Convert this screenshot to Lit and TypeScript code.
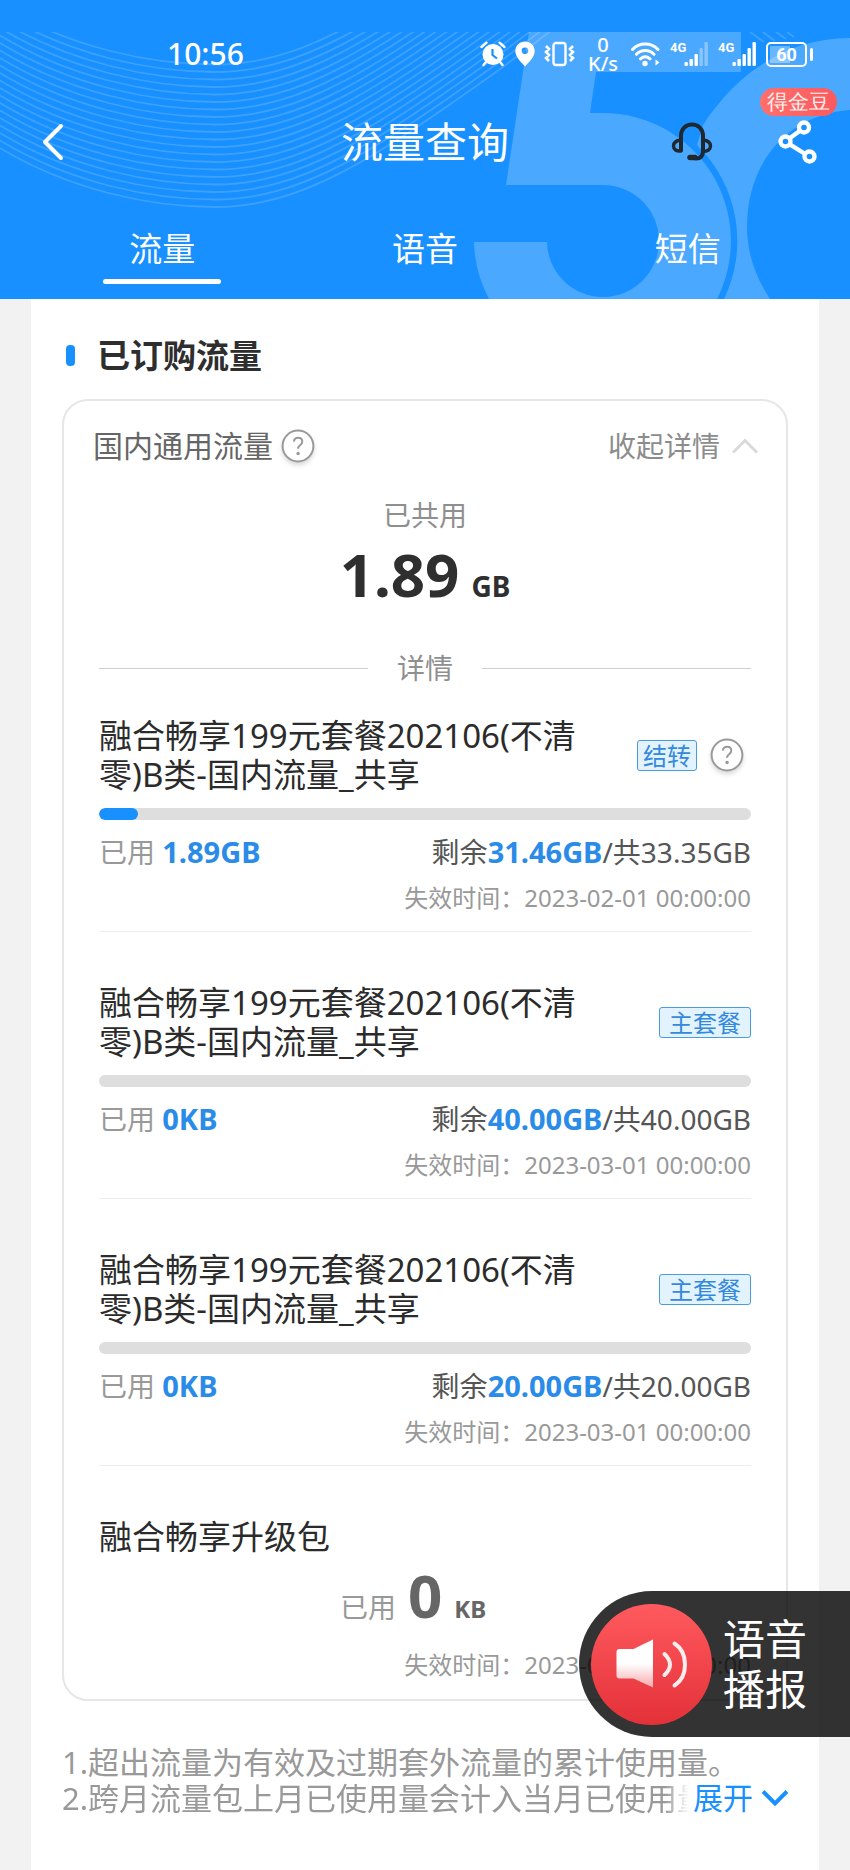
import { LitElement, html, svg, css, nothing } from "lit";
import { customElement, property, state } from "lit/decorators.js";

interface Plan {
  name: string;
  tag: string;
  carry: boolean;
  used: string;
  left: string;
  total: string;
  percent: number;
  expires: string;
}

const PLAN_NAME = "融合畅享199元套餐202106(不清零)B类-国内流量_共享";

const PLANS: Plan[] = [
  { name: PLAN_NAME, tag: "结转", carry: true, used: "1.89GB", left: "31.46GB", total: "33.35GB", percent: 6, expires: "2023-02-01 00:00:00" },
  { name: PLAN_NAME, tag: "主套餐", carry: false, used: "0KB", left: "40.00GB", total: "40.00GB", percent: 0, expires: "2023-03-01 00:00:00" },
  { name: PLAN_NAME, tag: "主套餐", carry: false, used: "0KB", left: "20.00GB", total: "20.00GB", percent: 0, expires: "2023-03-01 00:00:00" },
];

@customElement("help-button")
class HelpButton extends LitElement {
  static styles = css`
    :host { display: block; flex: none; }
    .help {
      display: block;
      padding: 0;
      border: 0;
      background: none;
      filter: drop-shadow(0 3px 2px rgba(0, 0, 0, 0.14));
    }
    .help svg { display: block; }
  `;
  render() {
    return html`<button class="help" aria-label="说明">
      <svg width="34" height="34" viewBox="0 0 34 34" fill="none" stroke="#999">
        <circle cx="17" cy="17" r="15.4" stroke-width="2" fill="#fff" />
        <path d="M12.8 12.6c.3-2.500 2-3.800 4.300-3.800 2.400 0 4.200 1.400 4.200 3.700 0 1.700-.9 2.700-2.200 3.700-1.400 1.100-2 1.700-2 3.500" stroke-width="2" />
        <circle cx="17.100" cy="24.500" r="1.700" fill="#999" stroke="none" />
      </svg>
    </button>`;
  }
}

@customElement("status-bar")
class StatusBar extends LitElement {
  static styles = css`
    :host {
      display: flex;
      justify-content: space-between;
      align-items: center;
      height: 44px;
      padding: 0 37px 0 167px;
      color: #fff;
    }
    .time { font-size: 30px; line-height: 40px; font-weight: 500; }
    .icons { display: flex; align-items: center; gap: 9px; }
    .icons svg { display: block; flex: none; }
    .rate {
      width: 30px;
      margin: 0 4px;
      font-size: 20px;
      line-height: 19px;
      font-weight: 500;
      text-align: center;
    }
    .rate span { display: block; }
    .signal { display: grid; grid-template-columns: 14px 25px; height: 26px; }
    .net { font: 700 13px/13px Roboto, sans-serif; white-space: nowrap; }
    .battery { display: flex; align-items: center; gap: 3px; }
    .cell {
      box-sizing: border-box;
      width: 41px;
      height: 25px;
      border: 2px solid #fff;
      border-radius: 5px;
      background: linear-gradient(90deg, rgba(255, 255, 255, 0.35) 60%, transparent 60%);
      background-clip: content-box;
      padding: 2px;
      display: grid;
      place-items: center;
      font: 700 18px/18px Roboto, sans-serif;
    }
    .tip { width: 3px; height: 13px; border-radius: 2px; background: #fff; }
  `;

  private bars(opacities: number[]) {
    return html`<svg width="25" height="26" viewBox="0 0 25 26" fill="#fff">
      ${opacities.map((o, i) => {
        const h = [4, 7, 12, 18, 24][i];
        return svg`<rect x=${i * 5 + 0.5} y=${25 - h} width="3.400" height=${h} rx="1" opacity=${o} />`;
      })}
    </svg>`;
  }

  render() {
    return html`
      <span class="time">10:56</span>
      <div class="icons">
        <svg width="26" height="26" viewBox="0 0 26 26" fill="none" stroke="#fff">
          <circle cx="13" cy="13.500" r="10.500" fill="#fff" stroke="none" />
          <path d="M1.500 6 6.500 1.700M24.500 6l-5-4.300M5.500 21.500 3.500 24M20.500 21.500l2 2.500" stroke-width="2.400" stroke-linecap="round" />
          <path d="M12.500 8v6l4.500 3.500" stroke="#1890ff" stroke-width="2.200" />
        </svg>
        <svg width="20" height="26" viewBox="0 0 20 26" fill="#fff" fill-rule="evenodd">
          <path d="M10 .5C4.600.5.3 4.600.3 9.800.3 16 5.500 20.500 10 25.500c4.500-5 9.700-9.500 9.700-15.700C19.700 4.600 15.400.5 10 .5zm0 6a3.300 3.300 0 1 1 0 6.600 3.300 3.300 0 0 1 0-6.600z" />
        </svg>
        <svg width="31" height="26" viewBox="0 0 31 26" fill="none" stroke="#fff" stroke-width="2.400">
          <rect x="9.500" y="2" width="12" height="22" rx="2.500" />
          <path d="M2 5l3 3-3 3 3 3-3 3 3 3M29 5l-3 3 3 3-3 3 3 3-3 3" stroke-width="2.600" />
        </svg>
        <div class="rate"><span>0</span><span>K/s</span></div>
        <svg width="30" height="26" viewBox="0 0 30 26" fill="none" stroke="#fff" stroke-width="3" stroke-linecap="round">
          <path d="M1.500 8.500c7-7.300 18.500-7.300 25.500 0M5.500 13.300c5-5 12.500-5 17.500 0M9.500 17.800c3-2.600 6.500-2.600 9.500 0" />
          <circle cx="14" cy="22.500" r="2.700" fill="#fff" stroke="none" />
          <path d="M24.500 18.500v6l4-3z" fill="#fff" stroke="none" />
        </svg>
        <div class="signal"><span class="net">4G</span>${this.bars([1, 1, 1, 0.35, 0.35])}</div>
        <div class="signal"><span class="net">4G</span>${this.bars([1, 1, 1, 1, 1])}</div>
        <div class="battery"><span class="cell">60</span><span class="tip"></span></div>
      </div>
    `;
  }
}

@customElement("page-header")
class PageHeader extends LitElement {
  @state() private active = 0;

  static styles = css`
    :host {
      display: block;
      position: relative;
      box-sizing: border-box;
      padding-top: 32px;
      background: #1890ff;
      color: #fff;
    }
    .art {
      position: absolute;
      top: 32px;
      right: 0;
      width: 100%;
      height: calc(100% - 32px);
    }
    status-bar, .nav, .tabs { position: relative; }
    .nav {
      display: grid;
      grid-template-columns: 1fr auto 1fr;
      align-items: center;
      height: 132px;
      padding: 0 33px;
    }
    .nav svg { display: block; }
    .icon { padding: 0; border: 0; background: none; }
    .back { justify-self: start; margin-left: 8px; }
    .title { margin: 0; font-size: 42px; line-height: 56px; font-weight: 400; }
    .actions { display: flex; justify-content: flex-end; align-items: center; gap: 65px; }
    .share { position: relative; }
    .badge {
      position: absolute;
      right: -20px;
      bottom: 48px;
      padding: 0 7px;
      border-radius: 14px;
      background: linear-gradient(90deg, #ff6f6b, #fb5a5f);
      color: #fff0ee;
      font-size: 21px;
      line-height: 28px;
      white-space: nowrap;
    }
    .tabs {
      display: grid;
      grid-template-columns: repeat(3, 1fr);
      height: 91px;
      padding: 0 31px;
    }
    .tab {
      display: flex;
      flex-direction: column;
      align-items: center;
      gap: 8px;
      padding: 19px 0 0;
      border: 0;
      background: none;
      color: inherit;
      font: inherit;
      font-size: 33px;
      line-height: 44px;
    }
    .line { width: 45%; height: 5px; border-radius: 3px; }
    .tab.active .line { background: #fff; }
  `;

  render() {
    const rings = Array.from({ length: 20 }, (_, i) => -7.5 * i);
    return html`
      <svg class="art" viewBox="0 32 850 267" preserveAspectRatio="xMaxYMin slice" aria-hidden="true">
        <g fill="none" stroke="#fff" stroke-opacity="0.16" stroke-width="1.800">
          ${rings.map(
            (dy) => svg`<path transform="translate(0 ${dy})" d="M-60 105C-40 122-20 135 0 148 70 190 150 207 215 207 300 207 370 162 503 67L560 24 620-22" />`
          )}
          <path d="M750 32l14 10M763 32l12 9M776 32l10 7M787 32l7 5" />
        </g>
        <g fill="#fff" fill-opacity="0.225">
          <path d="M529 32H741V72H596L590 113H603A128 128 0 0 1 717 299H489A128 128 0 0 1 474 242H547A56 56 0 1 0 603 185H506z" />
          <path d="M850 38C792 38 740 68 703 125L697 145A134 134 0 0 1 724 299H770C756 278 747 254 747 227 747 160 790 114 850 110z" />
        </g>
      </svg>
      <status-bar></status-bar>
      <div class="nav">
        <button class="icon back" aria-label="返回">
          <svg width="24" height="38" viewBox="0 0 24 38" fill="none" stroke="#fff" stroke-width="4" stroke-linecap="round" stroke-linejoin="round">
            <path d="M20 3 4 19l16 16" />
          </svg>
        </button>
        <h1 class="title">流量查询</h1>
        <div class="actions">
          <button class="icon" aria-label="客服">
            <svg width="42" height="40" viewBox="0 0 42 40" fill="none" stroke="#20282f" stroke-width="4" stroke-linecap="round">
              <path d="M10 28V13.500C10 7 14.800 2.500 21 2.500S32 7 32 13.500V29c0 5-2.500 7.500-7 7.500" />
              <path d="M19 35.500h5" stroke-width="5.500" />
              <path d="M10 18c-4.500.5-7.500 2.500-7.500 6s3 5.500 7.500 5M32 18c4.500.5 7.500 2.500 7.500 6s-3 5.500-7.500 5.500" stroke-width="3.400" />
            </svg>
          </button>
          <button class="icon share" aria-label="分享">
            <svg width="39" height="44" viewBox="0 0 39 44" fill="none" stroke="#fff" stroke-width="4.400">
              <circle cx="26" cy="7.500" r="5" />
              <circle cx="7.500" cy="21.500" r="5" />
              <circle cx="31.500" cy="36.500" r="5" />
              <path d="M22 10.800 11.700 18.300M11.800 24.300l15.400 9.700" />
            </svg>
            <span class="badge">得金豆</span>
          </button>
        </div>
      </div>
      <nav class="tabs" role="tablist">
        ${["流量", "语音", "短信"].map(
          (label, i) => html`<button
            class="tab ${i === this.active ? "active" : ""}"
            role="tab"
            aria-selected=${i === this.active}
            @click=${() => (this.active = i)}
          ><span>${label}</span><span class="line"></span></button>`
        )}
      </nav>
    `;
  }
}

@customElement("plan-item")
class PlanItem extends LitElement {
  @property({ attribute: false }) plan!: Plan;

  static styles = css`
    :host {
      display: block;
      padding-bottom: 15px;
      border-bottom: 1px solid #ececec;
    }
    .head { display: flex; align-items: center; justify-content: space-between; }
    .name {
      max-width: 78%;
      margin: 0;
      font-size: 33px;
      line-height: 39px;
      font-weight: 400;
      color: #2b2b2b;
      word-break: break-all;
    }
    .marks { display: flex; align-items: center; gap: 13px; }
    .marks.carry { margin-right: 7px; }
    .tag {
      padding: 0 9px;
      border: 1px solid #4a9be0;
      border-radius: 3px;
      background: #e2f3fe;
      color: #3489dc;
      font-size: 24px;
      line-height: 29px;
      white-space: nowrap;
    }
    .carry .tag { padding: 0 5px; }
    .bar {
      height: 12px;
      margin: 14px 0 12px;
      border-radius: 6px;
      background: #dedede;
      overflow: hidden;
    }
    .fill { height: 100%; border-radius: 6px; background: #1890ff; }
    .usage {
      display: flex;
      justify-content: space-between;
      height: 40px;
      font-size: 28px;
      line-height: 40px;
      color: #555;
    }
    .used { color: #999; }
    .num { font-size: 29px; font-weight: 700; color: #2a8be8; }
    .expires {
      margin: 8px 0 0;
      text-align: right;
      font-size: 24px;
      line-height: 36px;
      color: #999;
    }
  `;

  render() {
    const p = this.plan;
    return html`
      <div class="head">
        <h3 class="name">${p.name}</h3>
        <div class="marks ${p.carry ? "carry" : ""}">
          <span class="tag">${p.tag}</span>
          ${p.carry ? html`<help-button></help-button>` : nothing}
        </div>
      </div>
      <div class="bar" role="progressbar" aria-valuenow=${p.percent} aria-valuemin="0" aria-valuemax="100">
        <div class="fill" style="width:${p.percent}%"></div>
      </div>
      <div class="usage">
        <span class="used">已用 <span class="num">${p.used}</span></span>
        <span>剩余<span class="num">${p.left}</span>/共${p.total}</span>
      </div>
      <p class="expires">失效时间：${p.expires}</p>
    `;
  }
}

@customElement("voice-button")
class VoiceButton extends LitElement {
  static styles = css`
    :host { display: block; }
    .voice {
      display: flex;
      align-items: center;
      gap: 11px;
      height: 146px;
      padding: 0 43px 0 12px;
      border: 0;
      border-radius: 73px 0 0 73px;
      background: rgba(0, 0, 0, 0.8);
      color: #fff;
      font: inherit;
      font-size: 42px;
      line-height: 50px;
      text-align: left;
    }
    .label span { display: block; }
    svg { display: block; flex: none; }
  `;
  render() {
    return html`<button class="voice">
      <svg width="121" height="121" viewBox="-60.500 -60.500 121 121">
        <defs>
          <linearGradient id="disc" x1="0" y1="0" x2="0" y2="1">
            <stop offset="0" stop-color="#ff5a5f" />
            <stop offset="1" stop-color="#e33138" />
          </linearGradient>
          <linearGradient id="horn" x1="0" y1="0" x2="0" y2="1">
            <stop offset="0.500" stop-color="#fff" />
            <stop offset="1" stop-color="#fff" stop-opacity="0.550" />
          </linearGradient>
        </defs>
        <circle r="60.500" fill="url(#disc)" />
        <path d="M-32-15.500h14L1.500-25v48L-18 14h-14q-3 0-3-3v-23.500q0-3 3-3z" fill="url(#horn)" />
        <g fill="none" stroke="#fff" stroke-linecap="round">
          <path d="M13-10.500q11 10.500 0 21" stroke-width="4" opacity="0.900" />
          <path d="M23-21c14 9 14 33 0 42" stroke-width="4" opacity="0.900" />
        </g>
      </svg>
      <span class="label"><span>语音</span><span>播报</span></span>
    </button>`;
  }
}

@customElement("app-root")
class AppRoot extends LitElement {
  static styles = css`
    :host {
      display: flex;
      flex-direction: column;
      position: relative;
      min-height: 100vh;
      background: #f2f2f2;
      font-family: "Noto Sans", "Noto Sans CJK SC", sans-serif;
    }
    .sheet {
      flex: 1;
      margin: 0 31px;
      padding: 36px 31px 40px;
      background: #fff;
    }
    .section {
      display: flex;
      align-items: center;
      gap: 22px;
      margin: 0 0 23px 4px;
      font-size: 33px;
      line-height: 41px;
      font-weight: 700;
      color: #2e2e2e;
    }
    .section::before {
      content: "";
      width: 9px;
      height: 21px;
      border-radius: 4px;
      background: #1890ff;
    }
    .card {
      border: 2px solid #e6e6e6;
      border-radius: 26px;
      padding: 24px 28px 16px 29px;
    }
    .top { display: flex; align-items: center; justify-content: space-between; }
    .kind {
      display: flex;
      align-items: center;
      gap: 8px;
      font-size: 30px;
      line-height: 42px;
      color: #666;
    }
    .fold, .more {
      display: flex;
      align-items: center;
      padding: 0;
      border: 0;
      background: none;
      font: inherit;
      white-space: nowrap;
    }
    .fold { gap: 12px; font-size: 28px; line-height: 42px; color: #8c8c8c; }
    .fold svg, .more svg { display: block; }
    .body { padding: 0 7px 0 6px; }
    .label {
      margin: 28px 0 0;
      text-align: center;
      font-size: 28px;
      line-height: 40px;
      color: #8f8f8f;
    }
    .total, .usage {
      display: flex;
      justify-content: center;
      align-items: baseline;
      gap: 12px;
      margin: 7px 0 0;
      font-size: 28px;
      line-height: 40px;
    }
    .total { font-weight: 700; color: #2f2f2f; }
    .big { font-size: 60px; line-height: 64px; }
    .detail {
      display: flex;
      align-items: center;
      gap: 29px;
      margin: 42px 0 28px;
      font-size: 28px;
      line-height: 40px;
      color: #8f8f8f;
    }
    .detail::before, .detail::after { content: ""; flex: 1; height: 1px; background: #cfcfcf; }
    .plans { display: grid; gap: 51px; }
    .name { margin: 0; font-size: 33px; line-height: 39px; font-weight: 400; color: #2b2b2b; }
    .usage { padding-right: 24px; color: #999; }
    .usage .big, .usage .unit { font-weight: 700; color: #666; }
    .usage .unit { font-size: 24px; }
    .expires { margin: 18px 0 0; text-align: right; font-size: 24px; line-height: 36px; color: #999; }
    .notes { margin-top: 43px; font-size: 31px; line-height: 36px; color: #999; }
    .notes p { margin: 0; }
    .last { display: flex; gap: 4px; }
    .last p {
      flex: 1;
      overflow: hidden;
      white-space: nowrap;
      mask-image: linear-gradient(270deg, transparent, #000 24px);
    }
    .more { gap: 9px; font-size: 30px; line-height: 36px; color: #1890ff; }
    .float { position: absolute; right: 0; bottom: 133px; }
  `;

  render() {
    return html`
      <page-header></page-header>
      <main class="sheet">
        <h2 class="section">已订购流量</h2>
        <section class="card">
          <div class="top">
            <span class="kind">国内通用流量<help-button></help-button></span>
            <button class="fold">收起详情
              <svg width="26" height="18" viewBox="0 0 26 18" fill="none" stroke="#d9d9d9" stroke-width="3">
                <path d="M1 15.500 13 3.500l12 12" />
              </svg>
            </button>
          </div>
          <div class="body">
            <p class="label">已共用</p>
            <p class="total"><span class="big">1.89</span><span class="unit">GB</span></p>
            <div class="detail">详情</div>
            <div class="plans">
              ${PLANS.map((p) => html`<plan-item .plan=${p}></plan-item>`)}
              <div>
                <h3 class="name">融合畅享升级包</h3>
                <p class="usage"><span>已用</span><span class="big">0</span><span class="unit">KB</span></p>
                <p class="expires">失效时间：2023-03-01 00:00:00</p>
              </div>
            </div>
          </div>
        </section>
        <div class="notes">
          <p>1.超出流量为有效及过期套外流量的累计使用量。</p>
          <div class="last">
            <p>2.跨月流量包上月已使用量会计入当月已使用量</p>
            <button class="more">展开
              <svg width="26" height="18" viewBox="0 0 26 18" fill="none" stroke="#1890ff" stroke-width="4">
                <path d="M1 2.500l12 12 12-12" />
              </svg>
            </button>
          </div>
        </div>
      </main>
      <voice-button class="float"></voice-button>
    `;
  }
}
